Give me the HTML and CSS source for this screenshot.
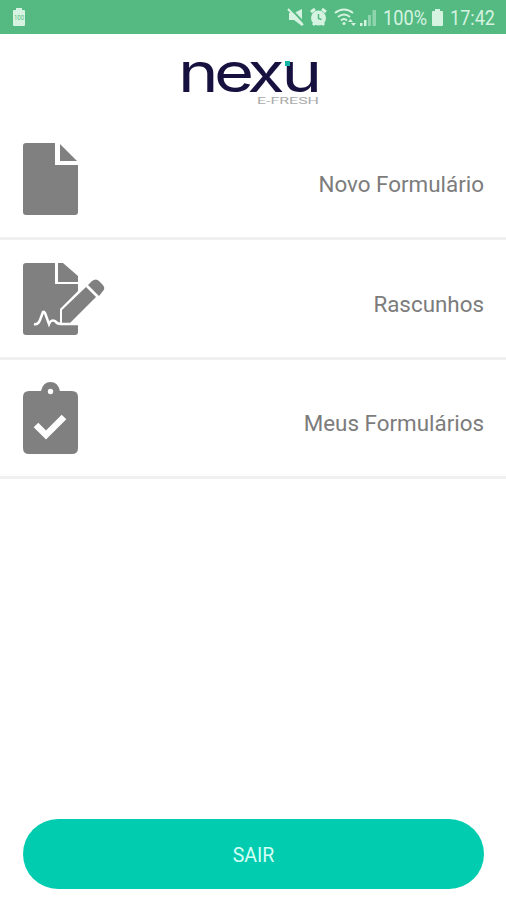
FILE: index.html
```html
<!DOCTYPE html>
<html lang="pt">
<head>
  <meta charset="UTF-8">
  <meta name="viewport" content="width=device-width, initial-scale=1.0">
  <title>Nexu E-Fresh</title>
  <link rel="stylesheet" href="styles.css">
</head>
<body>
  <div class="status-bar">
    <svg class="battery-left" width="14" height="20" viewBox="0 0 14 20">
      <path d="M4 1h6v2h2q1 0 1 1v14q0 1-1 1H2q-1 0-1-1V4q0-1 1-1h2z"/>
      <text x="2" y="13" textLength="10" lengthAdjust="spacingAndGlyphs">100</text>
    </svg>
    <svg class="status-icons" width="217" height="34" viewBox="280 0 217 34">
      <path d="M289 13h5l8-4v17l-8-6h-5z"/>
      <path class="cut" d="M289 7l16 17"/>
      <path class="line" d="M288 9l15 16"/>
      <circle cx="318.500" cy="18" r="7.500"/>
      <path class="thick" d="M311 12l4-3M326 12l-4-3M313 25l2-2M324 25l-2-2"/>
      <path class="hand" d="M318.500 14v4.500l3 1"/>
      <path class="line" d="M335 13q9-7 18 0M338 17q6-5 12 0M341 20.500q3-3 6 0"/>
      <circle cx="344" cy="23.500" r="1.600"/>
      <path d="M348 22l2.500-3 2.500 3zM351 23h5l-2.500 3z"/>
      <path d="M360 23h2.500v3H360z"/>
      <path d="M364 20h2.500v6H364z"/>
      <path class="faint" d="M368 15h3v11h-3zM372.500 10h3.500v16h-3.500z"/>
      <text x="383" y="25" textLength="44" lengthAdjust="spacingAndGlyphs">100%</text>
      <path d="M435 9h5v2h2q1 0 1 1v13q0 1-1 1h-9q-1 0-1-1V12q0-1 1-1h2z"/>
      <text x="450" y="25" textLength="45" lengthAdjust="spacingAndGlyphs">17:42</text>
    </svg>
  </div>

  <div class="logo">
    <svg width="140" height="50" viewBox="0 0 140 50">
      <text class="logo-name" transform="scale(1.25 1)" x="-2.500 26.500 53 80.500" y="36">nexu</text>
      <rect class="logo-dot" x="104" y="5" width="5" height="5"/>
      <text class="logo-sub" x="76" y="48" textLength="62" lengthAdjust="spacingAndGlyphs">E-FRESH</text>
    </svg>
  </div>

  <div class="menu">
    <div class="menu-item">
      <svg width="84" height="74" viewBox="0 0 84 74">
        <path d="M3 0h29v22h23v47q0 3-3 3H3q-3 0-3-3V3q0-3 3-3z"/>
        <path d="M37 1l17 17H37z"/>
      </svg>
      <span>Novo Formulário</span>
    </div>
    <div class="menu-item">
      <svg width="84" height="74" viewBox="0 0 84 74">
        <path d="M3 0h29v21h23v48q0 3-3 3H3q-3 0-3-3V3q0-3 3-3z"/>
        <path d="M35 0h5l15 13v6H35z"/>
        <path class="edge" d="M37 62V46l27-27 14 13-22 29z"/>
        <path d="M39 60V47l24-23 10 10-26 26z"/>
        <path d="M65 22l4-4q4-3 7 0l3 3q4 4 1 7l-4 5z"/>
        <path class="sign" d="M11 61q4 1 6-4l3-8q1-1 2 1l4 11q2-5 6-3 2 3 6 3h18"/>
      </svg>
      <span>Rascunhos</span>
    </div>
    <div class="menu-item">
      <svg width="84" height="74" viewBox="0 0 84 74">
        <path d="M6 9h12q2-9 9.500-9T37 9h12q6 0 6 6v51q0 6-6 6H6q-6 0-6-6V15q0-6 6-6z"/>
        <circle class="hole" cx="27.500" cy="9.500" r="2.700"/>
        <path class="check" d="M13 43l10 10 18-18"/>
      </svg>
      <span>Meus Formulários</span>
    </div>
  </div>

  <button class="exit">SAIR</button>
</body>
</html>
```
FILE: styles.css
```css
body {
  font-family: Roboto, "Liberation Sans", sans-serif;
  background: #fff;
  margin: 0;
  height: 900px;
  display: flex;
  flex-direction: column;
}
svg {
  display: block;
  overflow: visible;
}
.status-bar {
  height: 34px;
  background: #54ba82;
  display: flex;
  align-items: center;
  justify-content: space-between;
  padding: 0 9px 0 12px;
  fill: #d5f3e0;
}
.battery-left text {
  font-size: 7px;
  fill: #54ba82;
}
.status-icons text {
  font-size: 20.5px;
}
.status-icons .line,
.status-icons .thick,
.status-icons .hand,
.status-icons .cut {
  fill: none;
  stroke: #d5f3e0;
  stroke-width: 2;
}
.status-icons .thick {
  stroke-width: 3;
}
.status-icons .hand {
  stroke: #54ba82;
  stroke-width: 1.5;
}
.status-icons .cut {
  stroke: #54ba82;
  stroke-width: 2;
}
.status-icons .faint {
  opacity: 0.45;
}
.logo {
  height: 86px;
  box-sizing: border-box;
  padding: 22px 0 0 181px;
}
.logo-name {
  font-family: Inter, sans-serif;
  font-size: 55px;
  fill: #17113f;
}
.logo-dot {
  fill: #12b5a6;
}
.logo-sub {
  font-size: 9px;
  fill: #aaa;
}
.menu-item {
  height: 119.4px;
  box-sizing: border-box;
  border-bottom: 3px solid #f0f0f0;
  display: flex;
  align-items: flex-start;
  justify-content: space-between;
  padding: 22.5px 22px 0 23px;
  font-size: 22.4px;
  line-height: 26px;
  color: #7c7c7c;
}
.menu-item:first-child {
  height: 120.4px;
}
.menu-item span {
  padding-top: 28px;
}
.menu-item svg {
  fill: #808080;
}
.menu-item .edge {
  fill: #fff;
}
.menu-item .sign {
  fill: none;
  stroke: #fff;
  stroke-width: 2.5;
}
.menu-item .hole {
  fill: #fff;
}
.menu-item .check {
  fill: none;
  stroke: #fff;
  stroke-width: 6.5;
}
.exit {
  margin: auto 22px 11px 23px;
  height: 70px;
  border: none;
  border-radius: 35px;
  background: #02ccb0;
  color: #d3fff5;
  font-family: inherit;
  font-size: 19.5px;
  padding: 2px 0 0;
}
```
